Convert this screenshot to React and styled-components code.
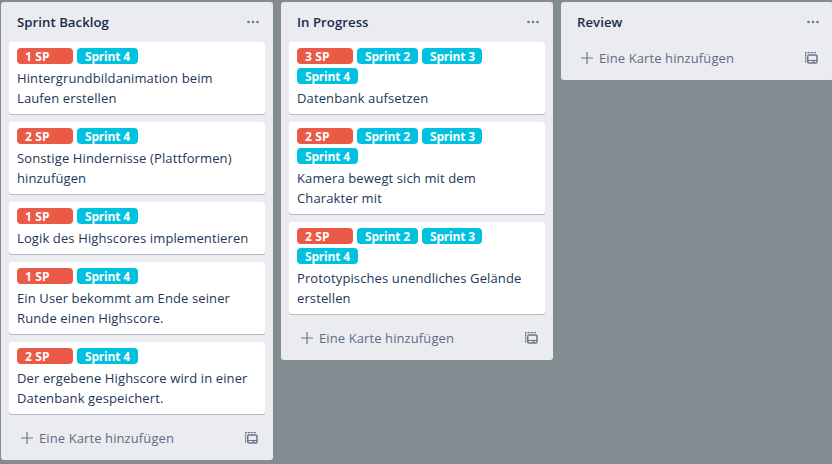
import React from "react";
import styled, { createGlobalStyle } from "styled-components";

const GlobalStyle = createGlobalStyle`
  * { box-sizing: border-box; }
  html, body { margin: 0; height: 100%; overflow: hidden; background: #838c91; }
  body {
    font-family: "Open Sans", "Noto Sans", sans-serif;
    font-size: 13px;
    line-height: 20px;
    color: #172b4d;
  }
`;

const Board = styled.main`
  display: flex;
  align-items: flex-start;
  gap: 8px;
  height: 464px;
  padding: 2px 0 0 1px;
  overflow: hidden;
`;

const List = styled.section`
  flex: 0 0 272px;
  background: #ebecf0;
  border-radius: 3px;
`;

const ListHeader = styled.header`
  display: flex;
  align-items: center;
  justify-content: space-between;
  height: 40px;
  padding: 0 13px 0 16px;
`;

const ListTitle = styled.h2`
  margin: 0;
  font-size: 13.2px;
  font-weight: 600;
  letter-spacing: 0.04px;
`;

const Cards = styled.div`
  display: flex;
  flex-direction: column;
  gap: 8px;
  padding: 0 8px;
  margin-bottom: ${(p) => (p.$empty ? 0 : 8)}px;
`;

const Card = styled.article`
  padding: 6px 8px;
  background: #fff;
  border-radius: 3px;
  box-shadow: 0 1px 0 rgba(9, 30, 66, 0.25);
`;

const Labels = styled.div`
  display: flex;
  flex-wrap: wrap;
  gap: 4px;
  margin-bottom: 4px;
`;

const Label = styled.span`
  width: ${(p) => p.$width}px;
  height: 16px;
  padding-left: 8px;
  border-radius: 4px;
  background: ${(p) => p.$color};
  color: #fff;
  font-size: 12px;
  font-weight: 700;
  line-height: 17px;
  letter-spacing: ${(p) => p.$tracking}px;
  white-space: nowrap;
`;

const CardLine = styled.div`
  white-space: nowrap;
  color: #23365a;
  letter-spacing: 0.12px;
`;

const Composer = styled.footer`
  display: flex;
  align-items: center;
  height: 38px;
  padding: 2px 15px 8px 20px;
  color: #5e6c84;
`;

const ComposerText = styled.span`
  flex: 1;
  margin-left: 6px;
  white-space: nowrap;
  letter-spacing: 0.1px;
`;

const Icon = styled.svg`
  display: block;
  flex: none;
`;

const MenuIcon = () => (
  <Icon width="13" height="4" viewBox="0 0 13 4" fill="#6b778c">
    <circle cx="1.5" cy="2" r="1.3" />
    <circle cx="6" cy="2" r="1.3" />
    <circle cx="10.5" cy="2" r="1.3" />
  </Icon>
);

const PlusIcon = () => (
  <Icon width="12" height="12" viewBox="0 0 12 12" fill="none" stroke="#6b778c" strokeWidth="1.2">
    <path d="M6 0v12M0 6h12" />
  </Icon>
);

const TemplateIcon = () => (
  <Icon width="13" height="12" viewBox="0 0 13 12" fill="none" stroke="#6b778c">
    <path d="M0.6 10.5V0.6H11" strokeWidth="1.2" strokeDasharray="2.2 0.8" />
    <rect x="2.7" y="3" width="9.3" height="8" rx="1.2" strokeWidth="1.5" />
    <path d="M3 8.5h9" strokeWidth="1.1" />
    <path d="M7.5 9.8h2" strokeWidth="1.4" />
  </Icon>
);

const RED = "#eb5a46";
const SKY = "#00c2e0";

const lists = [
  {
    title: "Sprint Backlog",
    cards: [
      { points: 1, sprints: [4], lines: ["Hintergrundbildanimation beim", "Laufen erstellen"] },
      { points: 2, sprints: [4], lines: ["Sonstige Hindernisse (Plattformen)", "hinzufügen"] },
      { points: 1, sprints: [4], lines: ["Logik des Highscores implementieren"] },
      { points: 1, sprints: [4], lines: ["Ein User bekommt am Ende seiner", "Runde einen Highscore."] },
      { points: 2, sprints: [4], lines: ["Der ergebene Highscore wird in einer", "Datenbank gespeichert."] },
    ],
  },
  {
    title: "In Progress",
    cards: [
      { points: 3, sprints: [2, 3, 4], lines: ["Datenbank aufsetzen"] },
      { points: 2, sprints: [2, 3, 4], lines: ["Kamera bewegt sich mit dem", "Charakter mit"] },
      { points: 2, sprints: [2, 3, 4], lines: ["Prototypisches unendliches Gelände", "erstellen"] },
    ],
  },
  { title: "Review", cards: [] },
];

export default function App() {
  return (
    <>
      <GlobalStyle />
      <Board>
        {lists.map((list) => (
          <List key={list.title}>
            <ListHeader>
              <ListTitle>{list.title}</ListTitle>
              <MenuIcon />
            </ListHeader>
            <Cards $empty={list.cards.length === 0}>
              {list.cards.map((card) => (
                <Card key={card.lines[0]}>
                  <Labels>
                    <Label $color={RED} $width={56} $tracking={0.1}>{card.points} SP</Label>
                    {card.sprints.map((n) => (
                      <Label key={n} $color={SKY} $width={n === 3 ? 60 : 61} $tracking={-0.18}>Sprint {n}</Label>
                    ))}
                  </Labels>
                  {card.lines.map((line) => (
                    <CardLine key={line}>{line}</CardLine>
                  ))}
                </Card>
              ))}
            </Cards>
            <Composer>
              <PlusIcon />
              <ComposerText>Eine Karte hinzufügen</ComposerText>
              <TemplateIcon />
            </Composer>
          </List>
        ))}
      </Board>
    </>
  );
}
